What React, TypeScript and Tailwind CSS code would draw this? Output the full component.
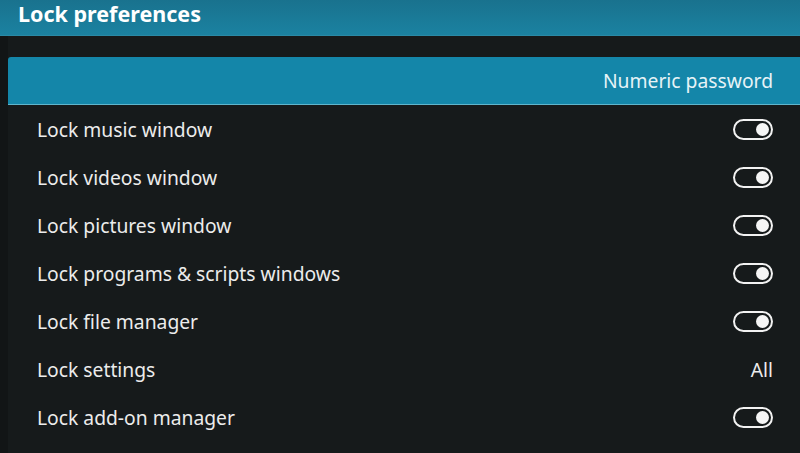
import React from 'react';

type Row = { label: string; value?: string; toggle?: boolean };

const rows: Row[] = [
  { label: 'Lock music window', toggle: true },
  { label: 'Lock videos window', toggle: true },
  { label: 'Lock pictures window', toggle: true },
  { label: 'Lock programs & scripts windows', toggle: true },
  { label: 'Lock file manager', toggle: true },
  { label: 'Lock settings', value: 'All' },
  { label: 'Lock add-on manager', toggle: true },
];

function Toggle() {
  return (
    <div className="w-[40px] h-[21px] rounded-full border-2 border-[#f2f2f2] flex items-center justify-end pr-[2px]">
      <div className="w-[13px] h-[13px] rounded-full bg-[#f5f5f5]" />
    </div>
  );
}

export default function App() {
  return (
    <div
      className="w-[800px] h-[453px] overflow-hidden bg-[#161a1b] text-[#ececec] flex flex-col"
      style={{ fontFamily: '"Noto Sans", "Open Sans", sans-serif' }}
    >
      {/* Header bar */}
      <div className="h-[36px] shrink-0 bg-gradient-to-b from-[#19728e] to-[#1b82a1] border-b border-[#2a8aa6] flex items-center pl-[18px]">
        <span className="text-[21.5px] font-bold text-white leading-none -mt-[8px]">Lock preferences</span>
      </div>

      <div className="flex-1 flex">
        <div className="w-[8px] shrink-0 bg-[#121516]" />
        <div className="flex-1 flex flex-col pt-[21px]">
          {/* Focused row */}
          <div className="h-[48px] bg-[#1486a9] border-b border-[#5fb5cc] rounded-tl-[3px] flex items-center justify-end pr-[27px]">
            <span className="text-[19.3px] text-[#e6f3f7] mt-[2px]">Numeric password</span>
          </div>
          {rows.map((r) => (
            <div key={r.label} className="h-[48px] flex items-center justify-between pl-[29px] pr-[27px]">
              <span className="text-[19.3px] mt-[3px]">{r.label}</span>
              {r.toggle ? <Toggle /> : <span className="text-[19.3px] mt-[3px]">{r.value}</span>}
            </div>
          ))}
        </div>
      </div>
    </div>
  );
}
